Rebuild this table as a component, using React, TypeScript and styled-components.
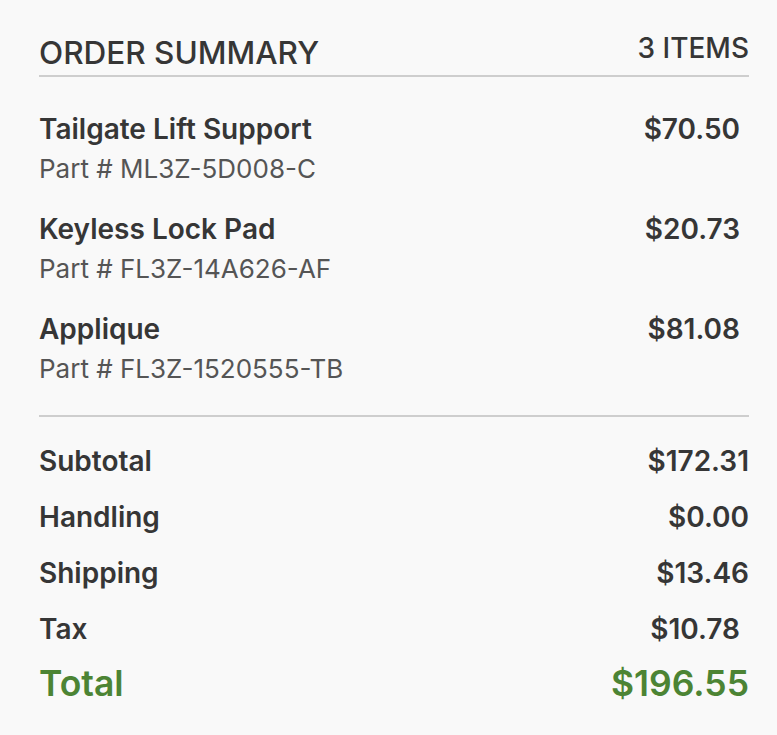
import styled, { createGlobalStyle } from 'styled-components';
import { FC } from 'react';

interface Item {
	name: string;
	part: string;
	price: string;
}

interface Line {
	label: string;
	amount: string;
	inset?: boolean;
}

const items: Item[] = [
	{ name: 'Tailgate Lift Support', part: 'ML3Z-5D008-C', price: '$70.50' },
	{ name: 'Keyless Lock Pad', part: 'FL3Z-14A626-AF', price: '$20.73' },
	{ name: 'Applique', part: 'FL3Z-1520555-TB', price: '$81.08' },
];

const lines: Line[] = [
	{ label: 'Subtotal', amount: '$172.31' },
	{ label: 'Handling', amount: '$0.00' },
	{ label: 'Shipping', amount: '$13.46' },
	{ label: 'Tax', amount: '$10.78', inset: true },
];

const App: FC = () => {
	return (
		<>
			<GlobalStyle />
			<Wrapper>
				<Header>
					<Title>ORDER SUMMARY</Title>
					<Count>{items.length} ITEMS</Count>
				</Header>
				<ItemList>
					{items.map(item => (
						<ItemRow key={item.part}>
							<ItemInfo>
								<ItemName>{item.name}</ItemName>
								<PartNo>Part # {item.part}</PartNo>
							</ItemInfo>
							<Amount $inset>{item.price}</Amount>
						</ItemRow>
					))}
				</ItemList>
				<Totals>
					{lines.map(line => (
						<SummaryRow key={line.label}>
							<Label>{line.label}</Label>
							<Amount $inset={line.inset}>{line.amount}</Amount>
						</SummaryRow>
					))}
					<TotalRow>
						<span>Total</span>
						<span>$196.55</span>
					</TotalRow>
				</Totals>
			</Wrapper>
		</>
	);
};

const GlobalStyle = createGlobalStyle`
	body {
		margin: 0;
		background: #f9f9f9;
		font-family: Inter, 'Noto Sans', sans-serif;
		color: #363636;
	}
`;

const Wrapper = styled.div`
	width: 777px;
	padding: 33px 28px 0 39px;
	box-sizing: border-box;
`;

const Header = styled.div`
	display: flex;
	justify-content: space-between;
	align-items: flex-start;
	padding-bottom: 2px;
	border-bottom: 2px solid #cecece;
`;

const Title = styled.div`
	font-size: 31.5px;
	font-weight: 500;
	line-height: 40px;
`;

const Count = styled.div`
	font-size: 28px;
	font-weight: 500;
	line-height: 31px;
`;

const ItemList = styled.div`
	display: flex;
	flex-direction: column;
	gap: 20px;
	padding: 32px 0 26px;
	border-bottom: 2px solid #cecece;
`;

const ItemRow = styled.div`
	display: flex;
	justify-content: space-between;
	align-items: flex-start;
`;

const ItemInfo = styled.div`
	display: flex;
	flex-direction: column;
`;

const ItemName = styled.div`
	font-size: 28px;
	font-weight: 600;
	line-height: 40px;
`;

const PartNo = styled.div`
	font-size: 26px;
	font-weight: 400;
	line-height: 40px;
	color: #555;
`;

const Amount = styled.div<{ $inset?: boolean }>`
	font-size: 28px;
	font-weight: 600;
	line-height: 40px;
	padding-right: ${p => (p.$inset ? '9px' : '0')};
`;

const Totals = styled.div`
	display: flex;
	flex-direction: column;
	gap: 16px;
	padding-top: 24px;
`;

const SummaryRow = styled.div`
	display: flex;
	justify-content: space-between;
`;

const Label = styled.div`
	font-size: 28px;
	font-weight: 600;
	line-height: 40px;
`;

const TotalRow = styled.div`
	display: flex;
	justify-content: space-between;
	font-size: 35.5px;
	font-weight: 600;
	line-height: 38px;
	color: #4c8434;
`;

export default App;
